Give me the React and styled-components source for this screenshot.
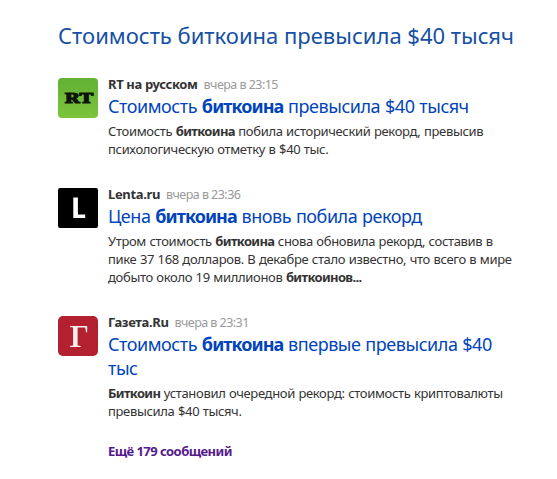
import React from 'react';
import styled, { createGlobalStyle } from 'styled-components';

const GlobalStyle = createGlobalStyle`
  body {
    margin: 0;
    background: #fff;
    font-family: 'Noto Sans', 'Open Sans', sans-serif;
  }
`

const RtLogo = () => (
  <Logo viewBox="0 0 40 40">
    <defs>
      <linearGradient id="rtGreen" x1="0" y1="0" x2="0" y2="1">
        <stop offset="0" stopColor="#62b135" />
        <stop offset="1" stopColor="#7cc43c" />
      </linearGradient>
    </defs>
    <rect width="40" height="40" rx="4" fill="url(#rtGreen)" />
    <LogoText x="6.5" y="24.7" textLength="28.5" lengthAdjust="spacingAndGlyphs">RT</LogoText>
  </Logo>
)

const LentaLogo = () => (
  <Logo viewBox="0 0 40 40">
    <rect width="40" height="40" rx="2" fill="#000" />
    <path d="M15.3 9.5h4.6v17h7.3V30H15.3z" fill="#fff" />
  </Logo>
)

const GazetaLogo = () => (
  <Logo viewBox="0 0 40 40">
    <rect width="40" height="40" rx="5" fill="#b3202f" />
    <path d="M12 10h17.2v6.3h-1.2l-.8-4.7h-7.6v17.8l3.1.6v1H12v-1l3.1-.6V11.6l-3.1-.6z" fill="#fbeff0" />
  </Logo>
)

const NewsItem = ({ logo, source, time, title, children }) => (
  <Item>
    {logo}
    <Content>
      <Meta>
        <Source>{source}</Source>
        <Time>{time}</Time>
      </Meta>
      <Title>{title}</Title>
      <Snippet>{children}</Snippet>
    </Content>
  </Item>
)

const App = () => (
  <Page>
    <GlobalStyle />
    <Heading>Стоимость биткоина превысила $40 тысяч</Heading>
    <NewsItem
      logo={<RtLogo />}
      source="RT на русском"
      time="вчера в 23:15"
      title={<>Стоимость <b>биткоина</b> превысила $40 тысяч</>}
    >
      Стоимость <b>биткоина</b> побила исторический рекорд, превысив<br />
      психологическую отметку в $40 тыс.
    </NewsItem>
    <NewsItem
      logo={<LentaLogo />}
      source="Lenta.ru"
      time="вчера в 23:36"
      title={<>Цена <b>биткоина</b> вновь побила рекорд</>}
    >
      Утром стоимость <b>биткоина</b> снова обновила рекорд, составив в<br />
      пике 37 168 долларов. В декабре стало известно, что всего в мире<br />
      добыто около 19 миллионов <b>биткоинов...</b>
    </NewsItem>
    <NewsItem
      logo={<GazetaLogo />}
      source="Газета.Ru"
      time="вчера в 23:31"
      title={<>Стоимость <b>биткоина</b> впервые превысила $40<br />тыс</>}
    >
      <b>Биткоин</b> установил очередной рекорд: стоимость криптовалюты<br />
      превысила $40 тысяч.
    </NewsItem>
    <More>Ещё 179 сообщений</More>
  </Page>
)

const Page = styled.main`
  width: 557px;
  height: 479px;
  box-sizing: border-box;
  padding: 21px 0 0 58px;
  overflow: hidden;
  white-space: nowrap;
`
const Heading = styled.h1`
  margin: 0 0 27px;
  font-size: 22px;
  line-height: 28px;
  font-weight: 400;
  color: #1650a4;
`
const Item = styled.article`
  display: flex;
  gap: 10px;
  margin-bottom: 28px;

  &:last-of-type {
    margin-bottom: 22px;
  }
`
const Logo = styled.svg`
  display: block;
  width: 40px;
  height: 40px;
  margin-top: 2px;
  flex: none;
`
const LogoText = styled.text`
  font-family: 'DejaVu Serif', serif;
  font-size: 13.5px;
  font-weight: 700;
  fill: #0b1405;
  stroke: #0b1405;
  stroke-width: 1.1px;
`
const Content = styled.div`
  display: flex;
  flex-direction: column;
`
const Meta = styled.div`
  display: flex;
  align-items: baseline;
  gap: 6px;
  height: 16px;
  font-size: 13px;
  line-height: 16px;
`
const Source = styled.span`
  font-weight: 700;
  letter-spacing: -0.35px;
  color: #333;
`
const Time = styled.span`
  font-size: 12.5px;
  letter-spacing: -0.54px;
  color: #999;
`
const Title = styled.h2`
  margin: 2px 0 4px;
  font-size: 18px;
  line-height: 24px;
  font-weight: 400;
  letter-spacing: -0.46px;
  word-spacing: 0.6px;
  color: #04b;

  b {
    letter-spacing: -0.95px;
  }
`
const Snippet = styled.p`
  margin: 0;
  font-size: 13px;
  line-height: 18px;
  letter-spacing: -0.33px;
  word-spacing: 0.4px;
  color: #333;

  b {
    letter-spacing: -0.65px;
  }
`
const More = styled.a`
  display: block;
  margin-left: 50px;
  font-size: 13px;
  line-height: 18px;
  font-weight: 700;
  letter-spacing: -0.55px;
  color: #551a8b;
`

export default App;
